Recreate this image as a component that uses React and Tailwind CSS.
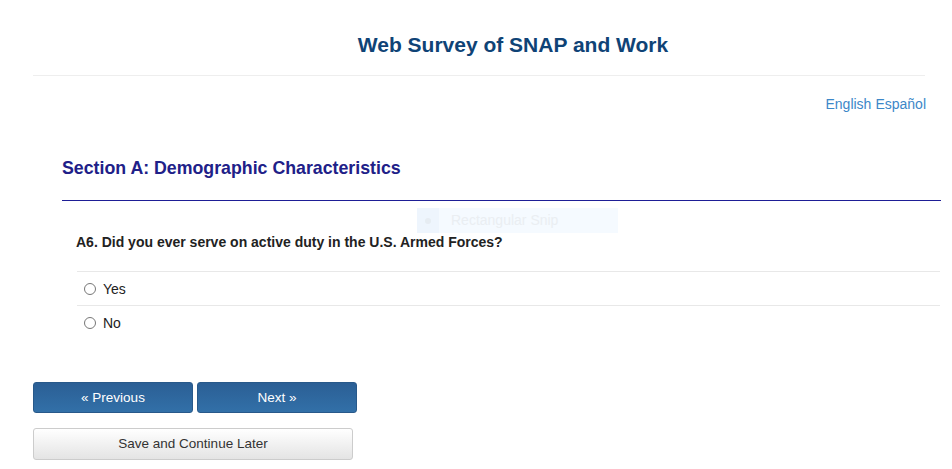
export default function App() {
  return (
    <div className="relative w-[952px] h-[469px] overflow-hidden bg-white font-['Liberation_Sans',Arial,sans-serif]">
      <div className="pl-[33px]">
        <div className="pt-[33px] pl-[68px] pr-[27px] text-center">
          <h1 className="text-[21px] leading-[24px] font-bold text-[#0f4376]">Web Survey of SNAP and Work</h1>
        </div>
        <div className="mt-[18px] mr-[27px] border-t border-[#eeeeee]"></div>
        <div className="mt-[18px] mr-[26px] flex justify-end text-[14px] leading-[20px] text-[#3c87c8]">
          <span>English</span>
          <span className="ml-[4px]">Español</span>
        </div>
        <div className="pl-[29px] mt-[43px]">
          <h2 className="text-[17.75px] leading-[22px] font-bold text-[#202088]">Section A: Demographic Characteristics</h2>
          <div className="mt-[21px] mr-[11px] h-[1px] bg-[#1e1e96]"></div>
          <div className="pl-[14px] mt-[33px]">
            <p className="text-[14px] leading-[16px] font-bold text-[#222]">A6. Did you ever serve on active duty in the U.S. Armed Forces?</p>
            <div className="mt-[21px] ml-[1px] mr-[12px]">
              <label className="flex items-center h-[34px] border-t border-[#e8e8e8] pl-[7px] pt-[1px] text-[14px] text-[#222]">
                <span className="w-[12px] h-[12px] rounded-full border border-[#777] bg-white"></span>
                <span className="ml-[7px]">Yes</span>
              </label>
              <label className="flex items-center h-[34px] border-t border-[#e8e8e8] pl-[7px] pt-[1px] text-[14px] text-[#222]">
                <span className="w-[12px] h-[12px] rounded-full border border-[#777] bg-white"></span>
                <span className="ml-[7px]">No</span>
              </label>
            </div>
          </div>
        </div>
        <div className="mt-[43px] flex gap-[4px]">
          <button className="w-[160px] h-[31px] pt-[1px] rounded-[3px] border border-[#28598a] bg-gradient-to-b from-[#2b5f95] to-[#3270a8] text-white text-[13.5px]">« Previous</button>
          <button className="w-[160px] h-[31px] pt-[1px] rounded-[3px] border border-[#28598a] bg-gradient-to-b from-[#2b5f95] to-[#3270a8] text-white text-[13.5px]">Next »</button>
        </div>
        <div className="mt-[15px]">
          <button className="w-[320px] h-[32px] pt-[1px] rounded-[3px] border border-[#cccccc] bg-gradient-to-b from-[#ffffff] to-[#e4e4e4] text-[#333] text-[13.5px]">Save and Continue Later</button>
        </div>
      </div>
      <div className="absolute left-[417px] top-[208px] w-[201px] h-[25px] bg-[#f5faff] flex items-center">
        <div className="w-[22px] h-full bg-[#eef5fd] flex items-center justify-center">
          <span className="w-[6px] h-[6px] rounded-full bg-[#e6ecf2]"></span>
        </div>
        <span className="ml-[12px] text-[14px] text-[#eaeef2]">Rectangular Snip</span>
      </div>
    </div>
  );
}
